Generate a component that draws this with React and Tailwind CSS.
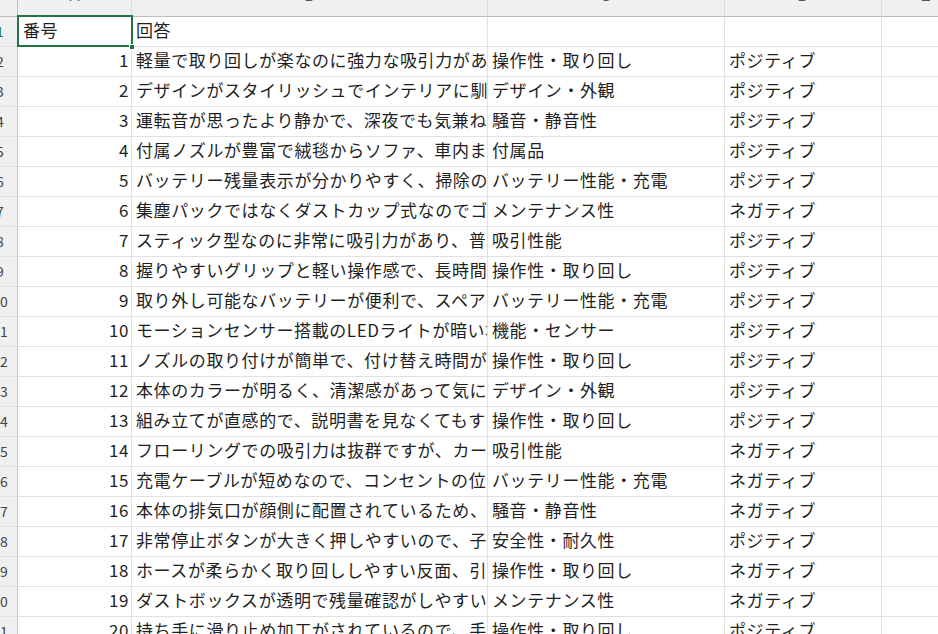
import React from 'react';

const rows = [
	['1', '軽量で取り回しが楽なのに強力な吸引力があって毎日の掃除が苦になりません。', '操作性・取り回し', 'ポジティブ'],
	['2', 'デザインがスタイリッシュでインテリアに馴染むので出しっぱなしでも気になりません。', 'デザイン・外観', 'ポジティブ'],
	['3', '運転音が思ったより静かで、深夜でも気兼ねなく使えます。', '騒音・静音性', 'ポジティブ'],
	['4', '付属ノズルが豊富で絨毯からソファ、車内まで幅広く使えます。', '付属品', 'ポジティブ'],
	['5', 'バッテリー残量表示が分かりやすく、掃除の途中で切れる心配がありません。', 'バッテリー性能・充電', 'ポジティブ'],
	['6', '集塵パックではなくダストカップ式なのでゴミ捨ての際に手が汚れます。', 'メンテナンス性', 'ネガティブ'],
	['7', 'スティック型なのに非常に吸引力があり、普段の掃除はこれ一台で十分です。', '吸引性能', 'ポジティブ'],
	['8', '握りやすいグリップと軽い操作感で、長時間使っても疲れにくいです。', '操作性・取り回し', 'ポジティブ'],
	['9', '取り外し可能なバッテリーが便利で、スペアを用意すれば長く使えます。', 'バッテリー性能・充電', 'ポジティブ'],
	['10', 'モーションセンサー搭載のLEDライトが暗い場所のホコリまで照らしてくれます。', '機能・センサー', 'ポジティブ'],
	['11', 'ノズルの取り付けが簡単で、付け替え時間がかからないのが良いです。', '操作性・取り回し', 'ポジティブ'],
	['12', '本体のカラーが明るく、清潔感があって気に入っています。', 'デザイン・外観', 'ポジティブ'],
	['13', '組み立てが直感的で、説明書を見なくてもすぐに使い始められました。', '操作性・取り回し', 'ポジティブ'],
	['14', 'フローリングでの吸引力は抜群ですが、カーペットでは少し物足りません。', '吸引性能', 'ネガティブ'],
	['15', '充電ケーブルが短めなので、コンセントの位置によっては不便です。', 'バッテリー性能・充電', 'ネガティブ'],
	['16', '本体の排気口が顔側に配置されているため、排気が気になります。', '騒音・静音性', 'ネガティブ'],
	['17', '非常停止ボタンが大きく押しやすいので、子供がいても安心です。', '安全性・耐久性', 'ポジティブ'],
	['18', 'ホースが柔らかく取り回ししやすい反面、引っ張ると本体が倒れやすいです。', '操作性・取り回し', 'ネガティブ'],
	['19', 'ダストボックスが透明で残量確認がしやすいですが、傷が付きやすいです。', 'メンテナンス性', 'ネガティブ'],
	['20', '持ち手に滑り止め加工がされているので、手が滑らず安心です。', '操作性・取り回し', 'ポジティブ'],
];

const cols = ['A', 'B', 'C', 'D', 'E'];
const font = { fontFamily: '"Noto Sans CJK JP", "Noto Sans", sans-serif' };

const cell = 'h-[30px] pb-[4px] border-r border-b border-[#e1e1e1] overflow-hidden whitespace-nowrap flex items-center text-[17px] tracking-[0.6px] text-[#1f1f1f]';

const RowHead = ({ n, active }) => (
	<div className="h-[30px] bg-[#f0f0f0] border-r border-b border-r-[#c6c6c6] border-b-[#e1e1e1] overflow-hidden flex items-center">
		<div className={`w-[40px] -ml-[20px] shrink-0 text-center text-[14px] ${active ? 'text-[#217346]' : 'text-[#444]'}`}>
			{n}
		</div>
	</div>
);

export default function App() {
	return (
		<div className="w-[938px] h-[634px] overflow-hidden bg-white" style={font}>
			<div className="grid grid-cols-[18px_114px_356px_237px_157px_88px] w-[970px]">
				{/* column headers */}
				<div className="h-[17px] bg-[#f0f0f0] border-r border-b border-[#bdbdbd]"></div>
				{cols.map((c) => (
					<div
						key={c}
						className="h-[17px] bg-[#f0f0f0] border-r border-r-[#dadada] border-b border-b-[#bdbdbd] overflow-hidden flex justify-center"
					>
						<span
							className={`-mt-[14px] text-[15px] leading-[20px] ${c === 'A' ? 'text-[#217346]' : 'text-[#555]'}`}
							style={{ fontFamily: '"Liberation Sans", sans-serif' }}
						>
							{c}
						</span>
					</div>
				))}

				{/* row 1 */}
				<RowHead n="1" active />
				<div className={`${cell} pl-[5px] relative overflow-visible`}>
					番号
					<div className="absolute -left-[1px] -top-[2px] -right-[2px] -bottom-[1px] border-2 border-[#217346] pointer-events-none"></div>
					<div className="absolute -right-[4px] -bottom-[4px] w-[6px] h-[6px] bg-[#217346] border border-white"></div>
				</div>
				<div className={`${cell} pl-[4px]`}>回答</div>
				<div className={cell}></div>
				<div className={cell}></div>
				<div className={cell}></div>

				{rows.map((r, i) => (
					<React.Fragment key={r[0]}>
						<RowHead n={String(i + 2)} />
						<div className={`${cell} justify-end pr-[2px]`}>{r[0]}</div>
						<div className={`${cell} pl-[4px]`}>{r[1]}</div>
						<div className={`${cell} pl-[4px]`}>{r[2]}</div>
						<div className={`${cell} pl-[4px]`}>{r[3]}</div>
						<div className={cell}></div>
					</React.Fragment>
				))}
			</div>
		</div>
	);
}
